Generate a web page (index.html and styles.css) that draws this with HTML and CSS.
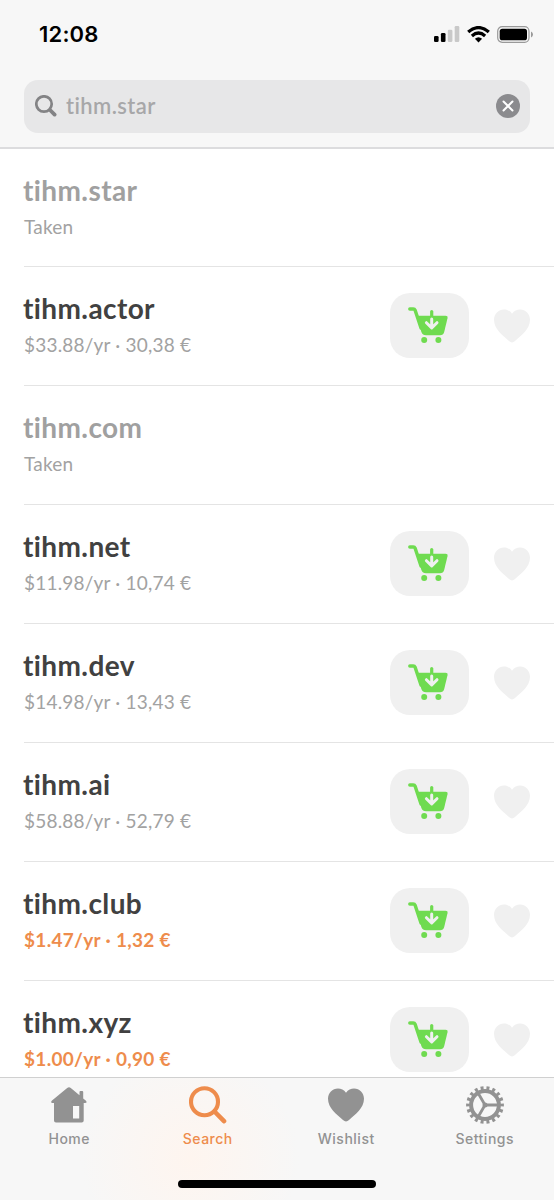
FILE: index.html
```html
<!DOCTYPE html>
<html lang="en">
<head>
    <meta charset="UTF-8">
    <meta name="viewport" content="width=device-width, initial-scale=1.0">
    <title>Domain Search</title>
    <link rel="stylesheet" href="styles.css">
</head>
<body>

    <!-- Shared icons -->
    <svg class="icon-defs">
        <symbol id="cart" viewBox="0 0 40 37">
            <path d="M1.8 2H5.3Q6.6 2 7.1 3.2L13 21" fill="none" stroke="#6fdb50" stroke-width="3.4" stroke-linecap="round"/>
            <path d="M8.5 8.8H37.5Q40 8.8 39.5 11.2L36.2 25Q35.3 28.3 32 28.3H18Q14.5 28.3 13.4 25Z" fill="#6fdb50"/>
            <path d="M23.7 4.6V11" fill="none" stroke="#6fdb50" stroke-width="3.2" stroke-linecap="round"/>
            <path d="M23.7 12V20.5M18.4 15.7L23.7 20.9L29 15.7" fill="none" stroke="#f0f0f0" stroke-width="3" stroke-linecap="round" stroke-linejoin="round"/>
            <circle cx="16.2" cy="33.1" r="3" fill="#6fdb50"/>
            <circle cx="30.4" cy="33.1" r="3" fill="#6fdb50"/>
        </symbol>
        <symbol id="heart" viewBox="0 0 36 34">
            <path d="M18 4.8C20 1.8 23 .5 26 .5C31.6 .5 36 4.8 36 10.8C36 20 27.5 26.5 21 32Q18 34.8 15 32C8.5 26.5 0 20 0 10.8C0 4.8 4.4 .5 10 .5C13 .5 16 1.8 18 4.8Z" fill="currentColor"/>
        </symbol>
    </svg>

    <div class="app">
        <header class="header">
            <div class="status-bar">
                <span class="time">12:08</span>
                <div class="status-icons">
                    <svg width="26" height="16" viewBox="0 0 26 16">
                        <rect x="0" y="10" width="4.6" height="6" rx="1.3"/>
                        <rect x="6.9" y="7" width="4.6" height="9" rx="1.3"/>
                        <rect x="13.8" y="3.7" width="4.6" height="12.3" rx="1.3" fill="#c9c9c9"/>
                        <rect x="20.7" y="0" width="4.6" height="16" rx="1.3" fill="#c9c9c9"/>
                    </svg>
                    <svg width="23" height="17" viewBox="0 0 23 17">
                        <path d="M1.2 6Q11.5-2.8 21.8 6M4.9 9.9Q11.5 4.2 18.1 9.9" fill="none" stroke="#000" stroke-width="3.3"/>
                        <path d="M7.9 12.7Q11.5 9.6 15.1 12.7L11.5 16.4Z"/>
                    </svg>
                    <svg width="36" height="17" viewBox="0 0 36 17">
                        <rect x=".7" y=".7" width="31.3" height="15.6" rx="4.5" fill="none" stroke="#999" stroke-width="1.2"/>
                        <rect x="2.7" y="2.7" width="27.3" height="11.6" rx="2.6"/>
                        <path d="M34 5.5Q36 6.5 36 8.5Q36 10.5 34 11.5Z" fill="#999"/>
                    </svg>
                </div>
            </div>
            <div class="search-box">
                <svg width="22" height="22" viewBox="0 0 22 22" fill="none" stroke="#838385" stroke-linecap="round">
                    <circle cx="9" cy="9" r="7.7" stroke-width="2.7"/>
                    <path d="M15 15L19.6 19.6" stroke-width="3.8"/>
                </svg>
                <span class="query">tihm.star</span>
                <svg width="24" height="24" viewBox="0 0 24 24">
                    <circle cx="12" cy="12" r="12" fill="#8b8b8e"/>
                    <path d="M7.5 7.5L16.5 16.5M16.5 7.5L7.5 16.5" stroke="#fff" stroke-width="2" stroke-linecap="round"/>
                </svg>
            </div>
        </header>

        <!-- Results -->
        <main class="results">
            <div class="result taken">
                <div class="info"><h2>tihm.star</h2><p>Taken</p></div>
            </div>
            <div class="result">
                <div class="info"><h2>tihm.actor</h2><p>$33.88/yr · 30,38 €</p></div>
                <button class="cart-button"><svg class="cart"><use href="#cart"/></svg></button>
                <svg class="heart"><use href="#heart"/></svg>
            </div>
            <div class="result taken">
                <div class="info"><h2>tihm.com</h2><p>Taken</p></div>
            </div>
            <div class="result">
                <div class="info"><h2>tihm.net</h2><p>$11.98/yr · 10,74 €</p></div>
                <button class="cart-button"><svg class="cart"><use href="#cart"/></svg></button>
                <svg class="heart"><use href="#heart"/></svg>
            </div>
            <div class="result">
                <div class="info"><h2>tihm.dev</h2><p>$14.98/yr · 13,43 €</p></div>
                <button class="cart-button"><svg class="cart"><use href="#cart"/></svg></button>
                <svg class="heart"><use href="#heart"/></svg>
            </div>
            <div class="result">
                <div class="info"><h2>tihm.ai</h2><p>$58.88/yr · 52,79 €</p></div>
                <button class="cart-button"><svg class="cart"><use href="#cart"/></svg></button>
                <svg class="heart"><use href="#heart"/></svg>
            </div>
            <div class="result sale">
                <div class="info"><h2>tihm.club</h2><p>$1.47/yr · 1,32 €</p></div>
                <button class="cart-button"><svg class="cart"><use href="#cart"/></svg></button>
                <svg class="heart"><use href="#heart"/></svg>
            </div>
            <div class="result sale">
                <div class="info"><h2>tihm.xyz</h2><p>$1.00/yr · 0,90 €</p></div>
                <button class="cart-button"><svg class="cart"><use href="#cart"/></svg></button>
                <svg class="heart"><use href="#heart"/></svg>
            </div>
        </main>

        <!-- Tab bar -->
        <footer class="footer">
            <nav class="tabs">
                <div class="tab">
                    <svg width="38" height="38" viewBox="0 0 38 38" fill="#929292">
                        <path fill-rule="evenodd" d="M17.2 2Q19 .6 20.8 2L29.5 9.3V6Q29.5 5 30.5 5H32.2Q33.2 5 33.2 6V12.5L36 14.8Q37.5 17 35 17H33.7V34.5Q33.7 36.5 31.7 36.5H6Q4 36.5 4 34.5V17H2.5Q0 16.5 2 14.5ZM23 20V32.5H29.2V20Z"/>
                    </svg>
                    <span>Home</span>
                </div>
                <div class="tab active">
                    <svg width="38" height="38" viewBox="0 0 38 38" fill="none" stroke="#ee8c4c" stroke-linecap="round">
                        <circle cx="15.5" cy="15.7" r="13.5" stroke-width="4.1"/>
                        <path d="M26 26L35 35.2" stroke-width="4.6"/>
                    </svg>
                    <span>Search</span>
                </div>
                <div class="tab">
                    <svg width="38" height="38"><use href="#heart" x="1" y="2" width="36" height="34"/></svg>
                    <span>Wishlist</span>
                </div>
                <div class="tab">
                    <svg width="38" height="38" viewBox="0 0 38 38" fill="none" stroke="#929292">
                        <circle cx="19" cy="19" r="13.9" stroke-width="4"/>
                        <circle cx="19" cy="19" r="17" stroke-width="3.8" pathLength="36" stroke-dasharray="1 1" stroke-dashoffset=".5"/>
                        <path d="M19 19H32M19 19L12.5 7.7M19 19L12.5 30.3" stroke-width="2.8"/>
                        <circle cx="19" cy="19" r="2.5" fill="#929292" stroke="none"/>
                    </svg>
                    <span>Settings</span>
                </div>
            </nav>
            <div class="home-indicator"></div>
        </footer>
    </div>

</body>
</html>
```
FILE: styles.css
```css
body {
    margin: 0;
    background-color: #fff;
    font-family: Lato, sans-serif;
}

.icon-defs {
    display: none;
}

.app {
    display: flex;
    flex-direction: column;
    height: 1200px;
    overflow: hidden;
}

svg {
    display: block;
    flex-shrink: 0;
}

/* Header */
.header {
    box-sizing: border-box;
    height: 149px;
    flex-shrink: 0;
    background-color: #f7f7f7;
    border-bottom: 2px solid #dcdcde;
}

.status-bar {
    display: flex;
    justify-content: space-between;
    align-items: center;
    box-sizing: border-box;
    height: 80px;
    padding: 0 21px 12px 39px;
}

.time {
    font-family: Inter, sans-serif;
    font-size: 22px;
    font-weight: 600;
    letter-spacing: 0.2px;
    color: #000;
}

.status-icons {
    display: flex;
    align-items: center;
    gap: 7px;
}

.search-box {
    display: flex;
    align-items: center;
    box-sizing: border-box;
    height: 53px;
    margin: 0 24px;
    padding: 0 10px 1px 11px;
    border-radius: 14px;
    background-color: #e7e7e8;
}

.query {
    flex: 1;
    margin-left: 9px;
    padding-bottom: 2px;
    font-size: 22px;
    font-weight: 600;
    letter-spacing: 0.4px;
    color: #a7a7a9;
}

/* Results */
.results {
    flex: 1;
    min-height: 0;
    overflow: hidden;
}

.result {
    display: flex;
    align-items: center;
    box-sizing: border-box;
    height: 119px;
    margin-left: 24px;
    padding: 0 24px 2px 0;
    border-bottom: 1px solid #e4e4e4;
}

.result:first-child {
    height: 118px;
}

.info {
    flex: 1;
    margin-left: -1px;
    padding-bottom: 1px;
}

.result h2 {
    margin: 0 0 7px;
    font-size: 28px;
    line-height: 34px;
    font-weight: 700;
    letter-spacing: 0.4px;
    color: #414141;
}

.result p {
    margin: 0 0 0 1px;
    font-size: 19px;
    line-height: 26px;
    letter-spacing: 0.2px;
    color: #a2a2a2;
}

.result.taken h2 {
    color: #a0a0a0;
}

.result.sale p {
    font-weight: 700;
    letter-spacing: 0.3px;
    color: #ee8c4c;
}

.cart-button {
    display: flex;
    align-items: center;
    justify-content: center;
    width: 79px;
    height: 65px;
    padding: 0 3px 0 0;
    border: none;
    border-radius: 20px;
    background-color: #f0f0f0;
}

.cart {
    width: 40px;
    height: 37px;
}

.heart {
    width: 36px;
    height: 34px;
    margin: 2px 0 0 25px;
    color: #f0f0f0;
}

/* Tab bar */
.footer {
    display: flex;
    flex-direction: column;
    justify-content: space-between;
    align-items: center;
    box-sizing: border-box;
    height: 123px;
    flex-shrink: 0;
    padding: 8px 0 12px;
    border-top: 1px solid #d0d0d0;
    background: radial-gradient(circle at 190px 80px, #fef5ef, rgba(247, 247, 247, 0) 110px) #f7f7f7;
}

.tabs {
    display: grid;
    grid-template-columns: repeat(4, 1fr);
    width: 100%;
}

.tab {
    display: flex;
    flex-direction: column;
    align-items: center;
    gap: 5px;
    font-family: Inter, sans-serif;
    font-size: 14px;
    line-height: 20px;
    font-weight: 500;
    letter-spacing: 0.5px;
    color: #929292;
}

.tab.active {
    color: #ee8c4c;
}

.home-indicator {
    width: 198px;
    height: 8px;
    border-radius: 4px;
    background-color: #000;
}
```
